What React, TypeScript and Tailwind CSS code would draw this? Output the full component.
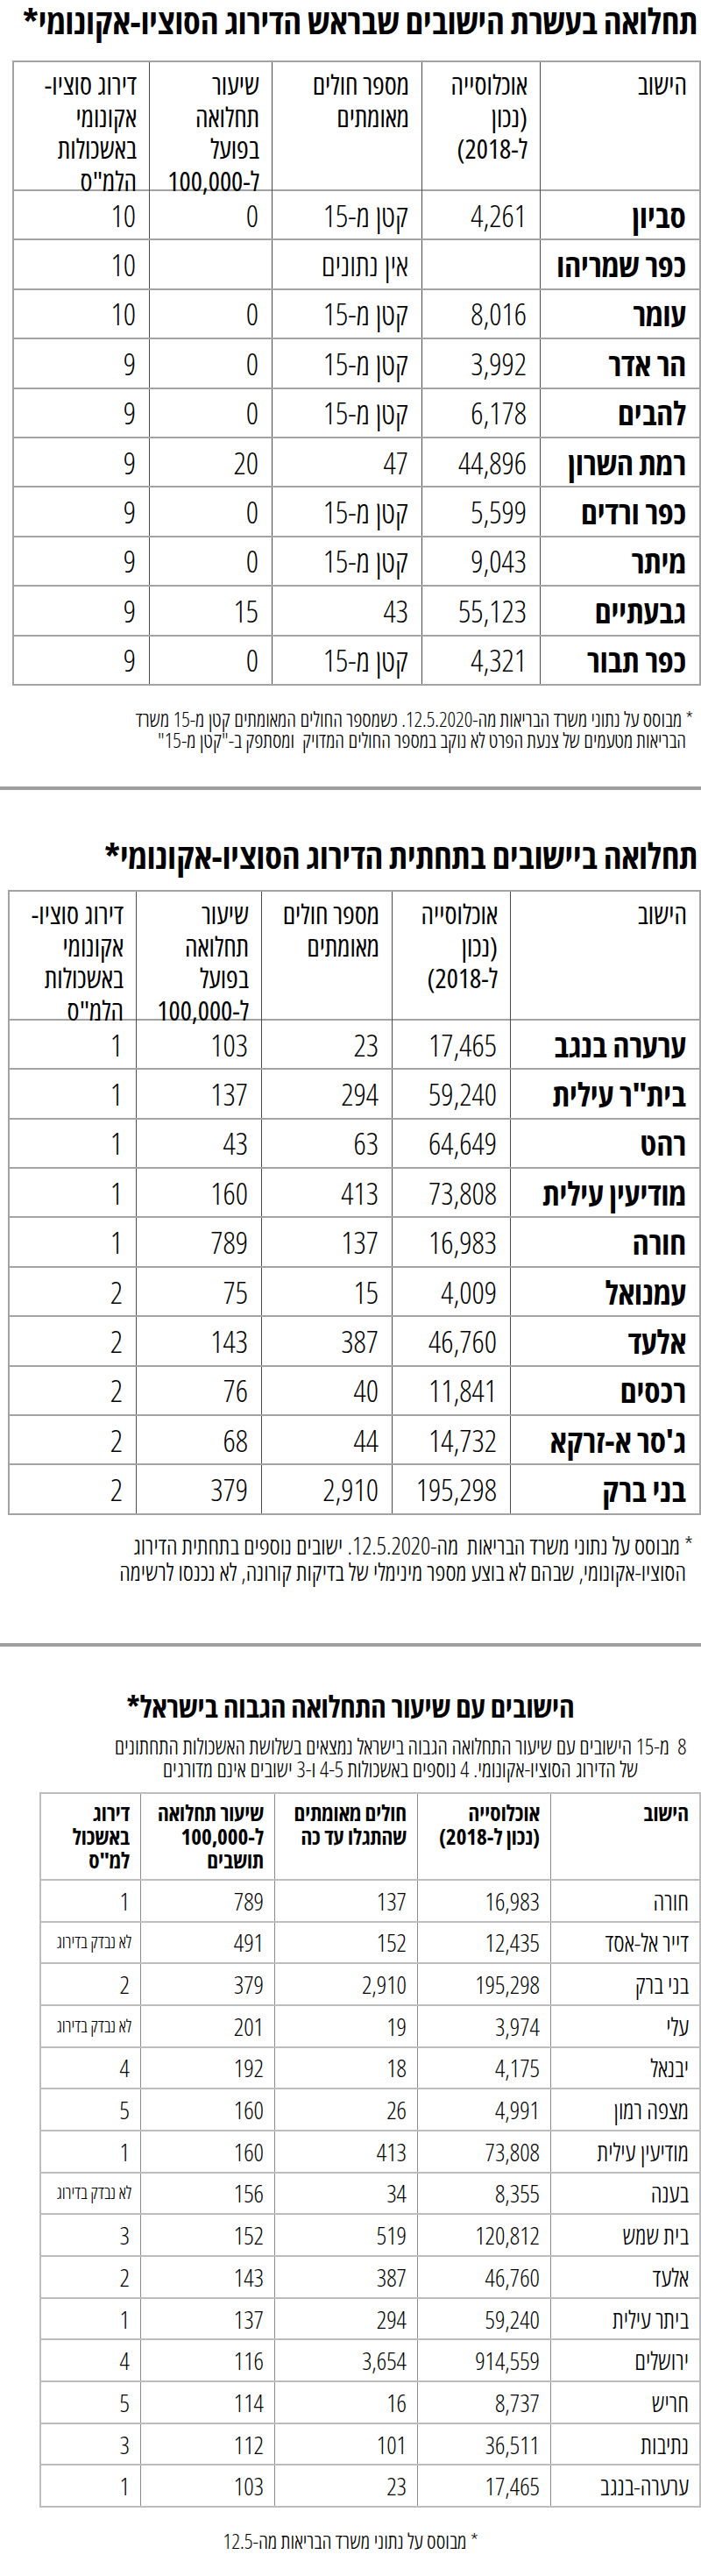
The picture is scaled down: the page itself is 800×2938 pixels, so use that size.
import React from "react";

type Row = React.ReactNode[];

const topRows: Row[] = [
  ["סביון", "4,261", "קטן מ-15", "0", "10"],
  ["כפר שמריהו", "", "אין נתונים", "", "10"],
  ["עומר", "8,016", "קטן מ-15", "0", "10"],
  ["הר אדר", "3,992", "קטן מ-15", "0", "9"],
  ["להבים", "6,178", "קטן מ-15", "0", "9"],
  ["רמת השרון", "44,896", "47", "20", "9"],
  ["כפר ורדים", "5,599", "קטן מ-15", "0", "9"],
  ["מיתר", "9,043", "קטן מ-15", "0", "9"],
  ["גבעתיים", "55,123", "43", "15", "9"],
  ["כפר תבור", "4,321", "קטן מ-15", "0", "9"],
];

const bottomRows: Row[] = [
  ["ערערה בנגב", "17,465", "23", "103", "1"],
  ['בית"ר עילית', "59,240", "294", "137", "1"],
  ["רהט", "64,649", "63", "43", "1"],
  ["מודיעין עילית", "73,808", "413", "160", "1"],
  ["חורה", "16,983", "137", "789", "1"],
  ["עמנואל", "4,009", "15", "75", "2"],
  ["אלעד", "46,760", "387", "143", "2"],
  ["רכסים", "11,841", "40", "76", "2"],
  ["ג'סר א-זרקא", "14,732", "44", "68", "2"],
  ["בני ברק", "195,298", "2,910", "379", "2"],
];

const NA = "לא נבדק בדירוג";

const highRows: Row[] = [
  ["חורה", "16,983", "137", "789", "1"],
  ["דייר אל-אסד", "12,435", "152", "491", NA],
  ["בני ברק", "195,298", "2,910", "379", "2"],
  ["עלי", "3,974", "19", "201", NA],
  ["יבנאל", "4,175", "18", "192", "4"],
  ["מצפה רמון", "4,991", "26", "160", "5"],
  ["מודיעין עילית", "73,808", "413", "160", "1"],
  ["בענה", "8,355", "34", "156", NA],
  ["בית שמש", "120,812", "519", "152", "3"],
  ["אלעד", "46,760", "387", "143", "2"],
  ["ביתר עילית", "59,240", "294", "137", "1"],
  ["ירושלים", "914,559", "3,654", "116", "4"],
  ["חריש", "8,737", "16", "114", "5"],
  ["נתיבות", "36,511", "101", "112", "3"],
  ["ערערה-בנגב", "17,465", "23", "103", "1"],
];

const bigHead: React.ReactNode[] = [
  "הישוב",
  <>
    אוכלוסייה
    <br />
    (נכון
    <br />
    ל-2018)
  </>,
  <>
    מספר חולים
    <br />
    מאומתים
  </>,
  <>
    שיעור
    <br />
    תחלואה
    <br />
    בפועל
    <br />
    ל-100,000
  </>,
  <>
    דירוג סוציו-
    <br />
    אקונומי
    <br />
    באשכולות
    <br />
    הלמ"ס
  </>,
];

const highHead: React.ReactNode[] = [
  "הישוב",
  <>
    אוכלוסייה
    <br />
    (נכון ל-2018)
  </>,
  <>
    חולים מאומתים
    <br />
    שהתגלו עד כה
  </>,
  <>
    שיעור תחלואה
    <br />
    ל-100,000
    <br />
    תושבים
  </>,
  <>
    דירוג
    <br />
    באשכול
    <br />
    למ"ס
  </>,
];

type TableProps = {
  wrap: string;
  grid: string;
  headRow: string;
  headCell: string;
  row: string;
  cell: string;
  nameCell: string;
  vline: string;
  head: React.ReactNode[];
  rows: Row[];
  naCell?: string;
};

function DataTable(p: TableProps) {
  const last = p.head.length - 1;
  return (
    <div className={p.wrap}>
      <div className={`${p.grid} ${p.headRow}`}>
        {p.head.map((h, i) => (
          <div key={i} className={`${p.headCell} ${i < last ? p.vline : ""}`}>
            {h}
          </div>
        ))}
      </div>
      {p.rows.map((r, ri) => (
        <div key={ri} className={`${p.grid} ${p.row}`}>
          {r.map((c, i) => {
            let cls = i === 0 ? p.nameCell : p.cell;
            if (c === NA && p.naCell) cls = p.naCell;
            return (
              <div key={i} className={`${cls} ${i < last ? p.vline : ""}`}>
                {c}
              </div>
            );
          })}
        </div>
      ))}
    </div>
  );
}

export default function App() {
  return (
    <div
      dir="rtl"
      className="w-[800px] bg-white text-black font-['Open_Sans','DejaVu_Sans',sans-serif] [font-stretch:75%]"
    >
      {/* top of the socio-economic ranking */}
      <h2 className="pr-1 text-[40px] leading-[48px] font-bold whitespace-nowrap">
        תחלואה בעשרת הישובים שבראש הדירוג הסוציו-אקונומי*
      </h2>
      <DataTable
        wrap="mt-[21px] ml-[14px] border-x-2 border-t-2 border-[#a3a3a3]"
        grid="grid grid-cols-[182px_135px_171px_140px_1fr]"
        headRow="h-[147px] border-b-2 border-[#a3a3a3]"
        headCell="px-[14px] pt-[7px] text-[31px] leading-[36.7px] font-medium"
        row="h-[56.4px] border-b-2 border-[#a3a3a3]"
        cell="flex items-center px-[15px] text-[35px] leading-none font-light"
        nameCell="flex items-center px-[15px] text-[37px] leading-none font-bold"
        vline="border-l border-[#4d4d4d]"
        head={bigHead}
        rows={topRows}
      />
      <div className="mt-[26px] text-[23.5px] leading-[24px] font-light whitespace-nowrap">
        <div className="pr-[9px]">
          * מבוסס על נתוני משרד הבריאות מה-12.5.2020. כשמספר החולים המאומתים קטן מ-15 משרד
        </div>
        <div className="pr-[17px]">
          הבריאות מטעמים של צנעת הפרט לא נוקב במספר החולים המדויק &nbsp;ומסתפק ב-"קטן מ-15"
        </div>
      </div>
      <div className="mt-[41px] h-[4px] bg-[#9e9e9e]" />

      {/* bottom of the socio-economic ranking */}
      <h2 className="mt-[51px] pr-1 text-[40px] leading-[48px] font-bold whitespace-nowrap">
        תחלואה ביישובים בתחתית הדירוג הסוציו-אקונומי*
      </h2>
      <DataTable
        wrap="mt-[15px] ml-[9px] border-x-2 border-t-2 border-[#a3a3a3]"
        grid="grid grid-cols-[216px_135px_149px_143px_1fr]"
        headRow="h-[147px] border-b-2 border-[#a3a3a3]"
        headCell="px-[14px] pt-[7px] text-[31px] leading-[36.7px] font-medium"
        row="h-[56.4px] border-b-2 border-[#a3a3a3]"
        cell="flex items-center px-[15px] text-[35px] leading-none font-light"
        nameCell="flex items-center px-[15px] text-[37px] leading-none font-bold"
        vline="border-l border-[#4d4d4d]"
        head={bigHead}
        rows={bottomRows}
      />
      <div className="mt-[20px] text-[27.5px] leading-[30px] font-light whitespace-nowrap">
        <div className="pr-[9px]">
          * מבוסס על נתוני משרד הבריאות &nbsp;מה-12.5.2020. ישובים נוספים בתחתית הדירוג
        </div>
        <div className="pr-[17px]">
          הסוציו-אקונומי, שבהם לא בוצע מספר מינימלי של בדיקות קורונה, לא נכנסו לרשימה
        </div>
      </div>
      <div className="mt-[66px] h-[4px] bg-[#9e9e9e]" />

      {/* highest morbidity */}
      <h2 className="mt-[48px] text-center text-[34px] leading-[40px] font-bold">
        הישובים עם שיעור התחלואה הגבוה בישראל*
      </h2>
      <p className="mt-[12px] ml-[118px] mr-[4px] text-center text-[25px] leading-[26px] font-light whitespace-nowrap">
        8&nbsp; מ-15 הישובים עם שיעור התחלואה הגבוה בישראל נמצאים בשלושת האשכולות התחתונים
        <br />
        של הדירוג הסוציו-אקונומי. 4 נוספים באשכולות 4-5 ו-3 ישובים אינם מדורגים
      </p>
      <DataTable
        wrap="mt-[14px] ml-[22px] w-[755px] border-x-2 border-t-2 border-[#bdbdbd]"
        grid="grid grid-cols-[170px_152px_163px_153px_1fr]"
        headRow="h-[99px] border-b-2 border-[#bdbdbd]"
        headCell="px-[12px] pt-[8px] text-[25px] leading-[27px] font-bold"
        row="h-[47.7px] border-b-2 border-[#bdbdbd]"
        cell="flex items-center px-[12px] text-[28px] leading-none font-light"
        nameCell="flex items-center px-[12px] text-[28px] leading-none font-light"
        vline="border-l border-[#8c8c8c]"
        naCell="flex items-center px-[10px] text-[20px] leading-none font-light whitespace-nowrap"
        head={highHead}
        rows={highRows}
      />
      <p className="mt-[26px] text-center text-[24px] leading-[24px] font-light">
        * מבוסס על נתוני משרד הבריאות מה-12.5
      </p>
    </div>
  );
}
